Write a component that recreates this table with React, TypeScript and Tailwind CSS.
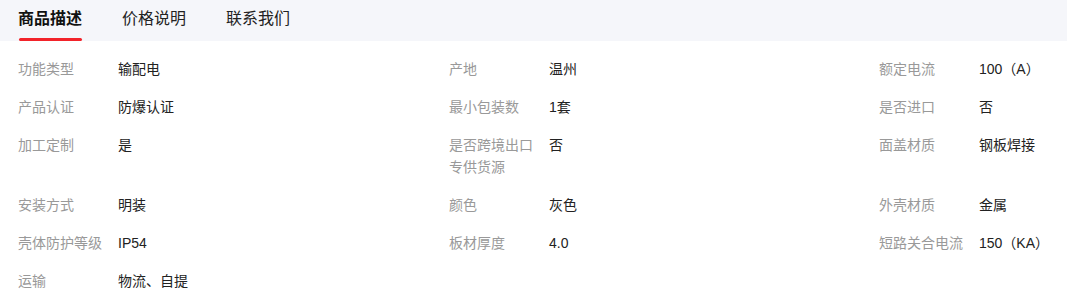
import React from "react";

const items: [string, string][] = [
  ["功能类型", "输配电"],
  ["产地", "温州"],
  ["额定电流", "100（A）"],
  ["产品认证", "防爆认证"],
  ["最小包装数", "1套"],
  ["是否进口", "否"],
  ["加工定制", "是"],
  ["是否跨境出口专供货源", "否"],
  ["面盖材质", "钢板焊接"],
  ["安装方式", "明装"],
  ["颜色", "灰色"],
  ["外壳材质", "金属"],
  ["壳体防护等级", "IP54"],
  ["板材厚度", "4.0"],
  ["短路关合电流", "150（KA）"],
  ["运输", "物流、自提"],
];

export default function App() {
  return (
    <div
      className="w-[1067px] h-[295px] bg-white overflow-hidden"
      style={{ fontFamily: '"Liberation Sans", "Noto Sans CJK SC", sans-serif' }}
    >
      <div className="h-[41px] bg-[#f5f6fa] flex pl-[18px] gap-[40px]">
        <div className="relative w-[64px] flex flex-col items-center">
          <span className="text-[16px] leading-[37px] font-bold text-[#111]">商品描述</span>
          <span className="absolute left-[1px] right-0 bottom-0 h-[3px] rounded-full bg-[#f2232a]" />
        </div>
        <div className="w-[64px]">
          <span className="text-[16px] leading-[37px] text-[#222]">价格说明</span>
        </div>
        <div className="w-[64px]">
          <span className="text-[16px] leading-[37px] text-[#222]">联系我们</span>
        </div>
      </div>
      <div className="grid grid-cols-[431px_430px_1fr] gap-y-[16px] pl-[18px] pt-[17px] text-[14px] leading-[22px]">
        {items.map(([k, v]) => (
          <div key={k} className="flex">
            <div className="w-[90px] shrink-0 text-[#999]">{k}</div>
            <div className="ml-[10px] text-[#222]">{v}</div>
          </div>
        ))}
      </div>
    </div>
  );
}
